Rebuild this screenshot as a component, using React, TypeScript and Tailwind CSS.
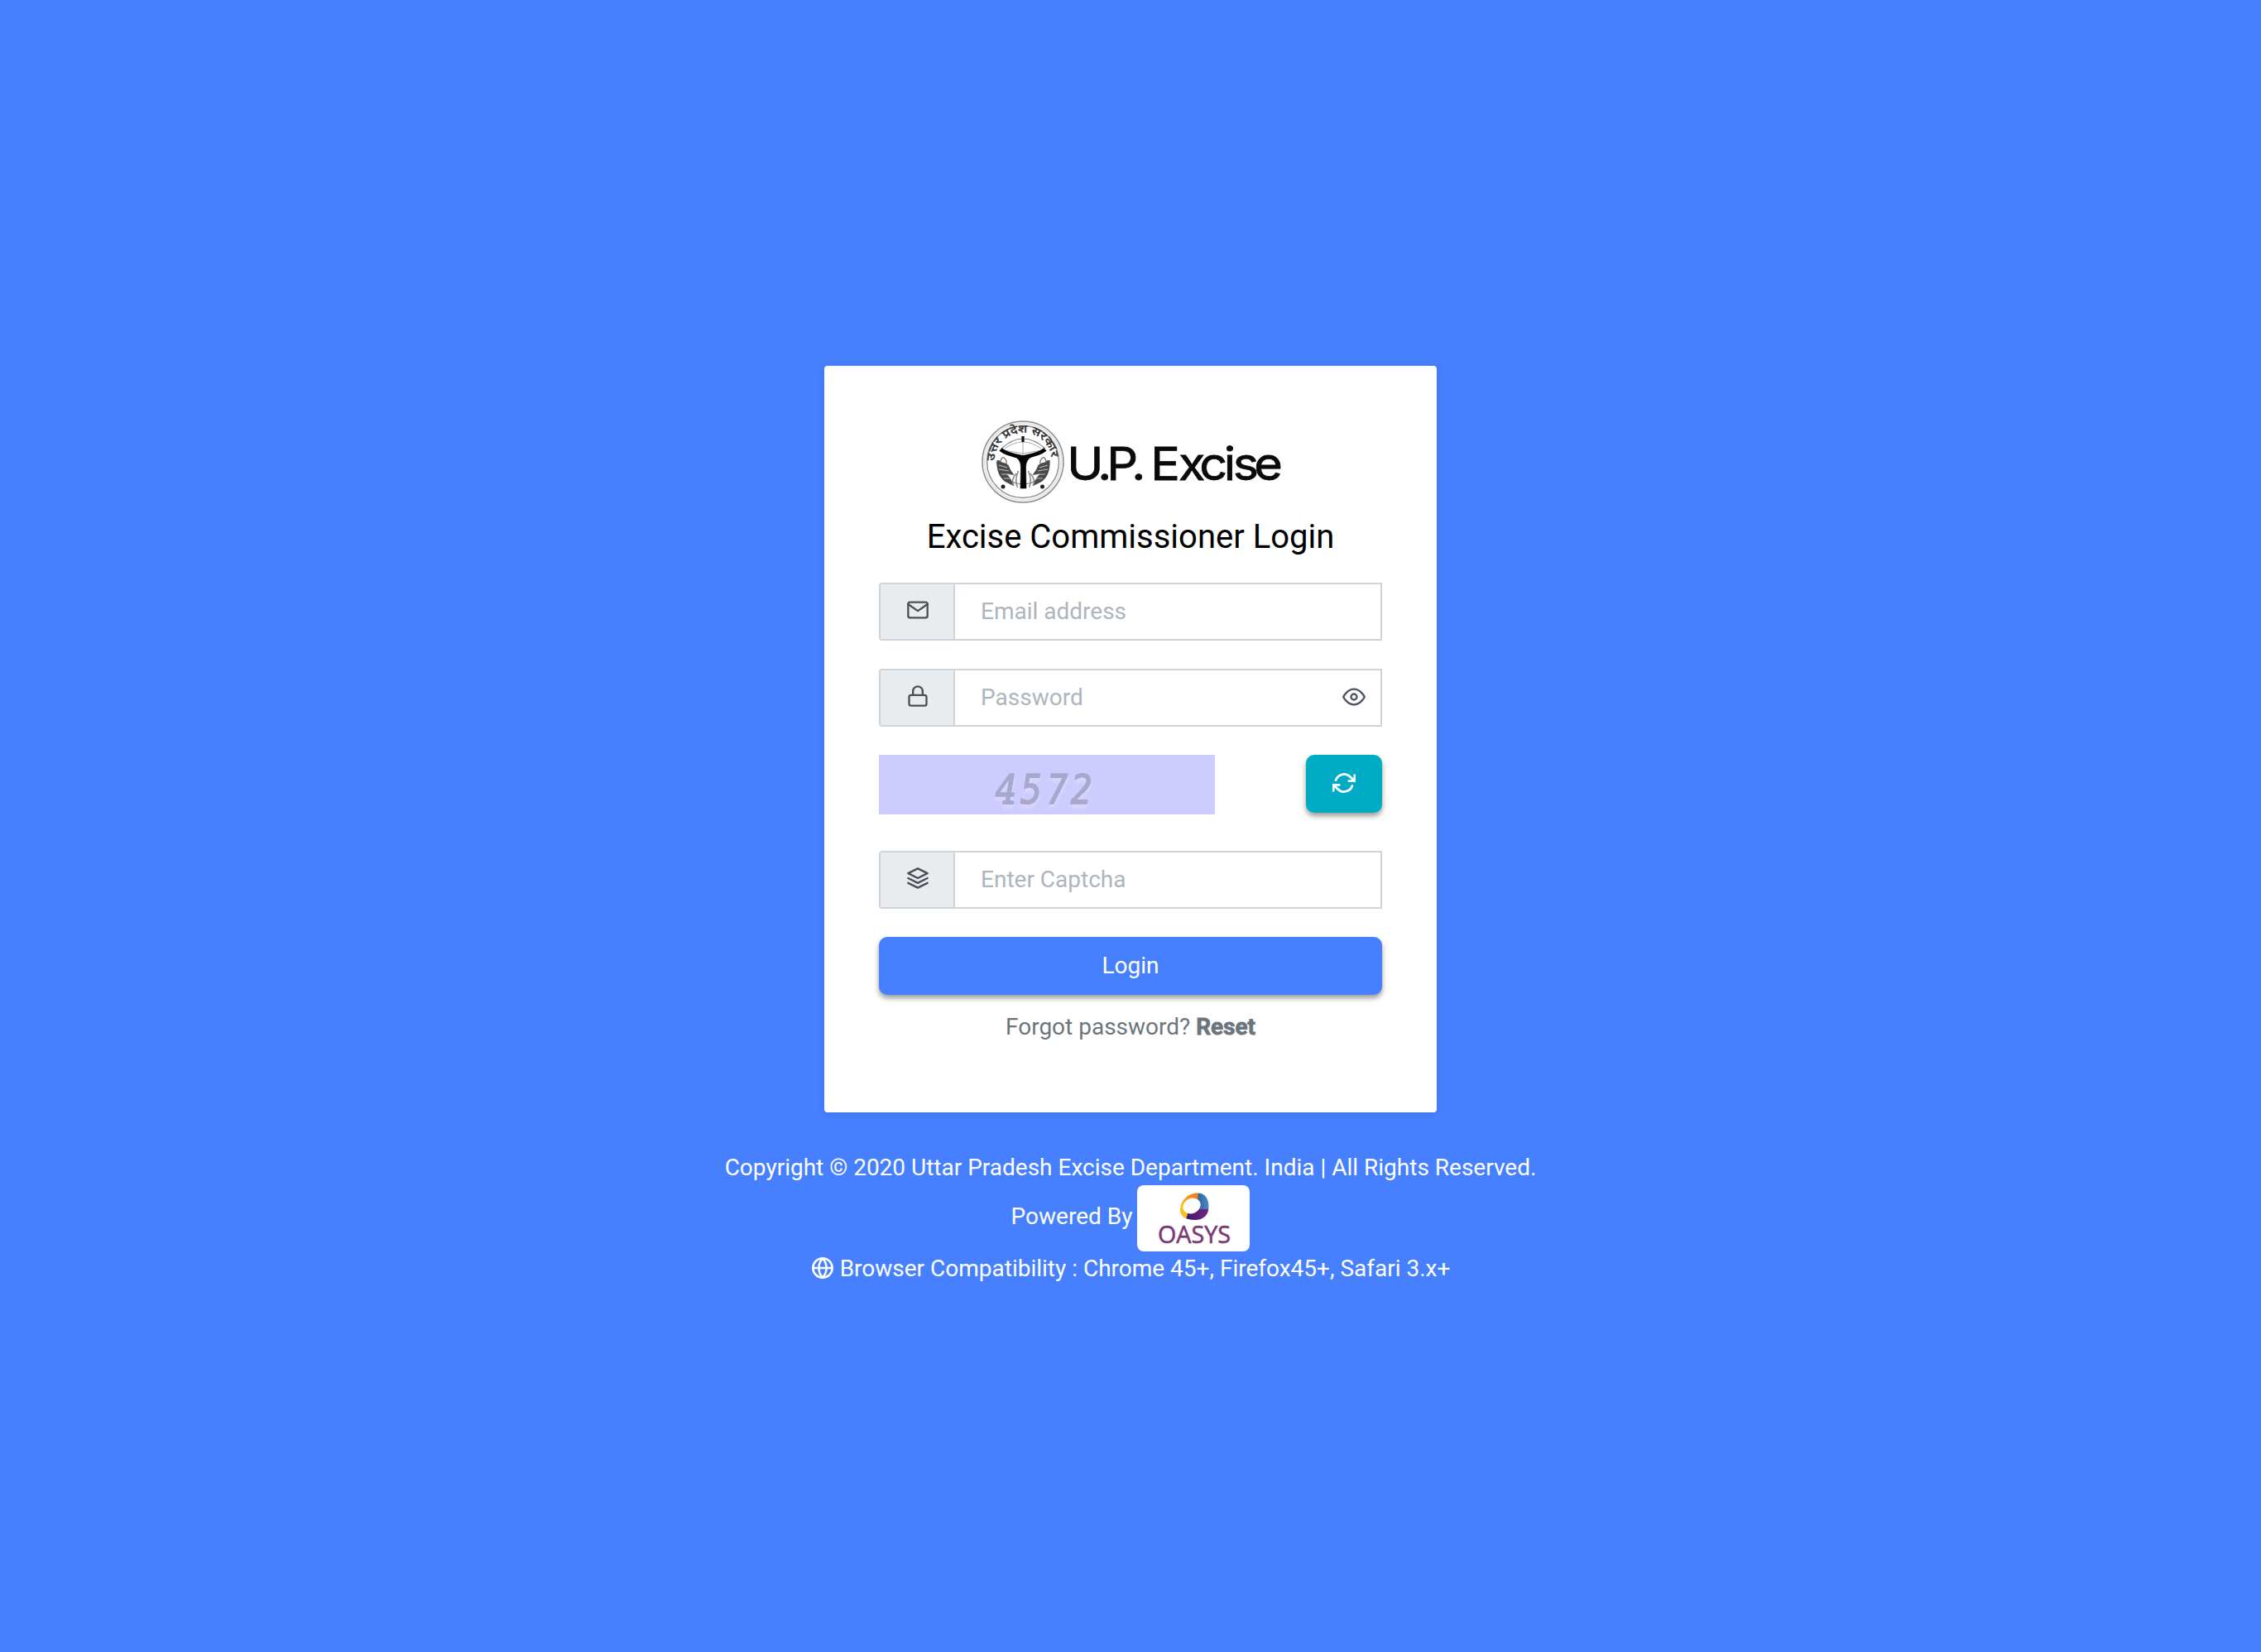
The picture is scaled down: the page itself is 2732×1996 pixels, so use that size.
import { FiMail, FiLock, FiLayers, FiEye, FiRefreshCw, FiGlobe } from "react-icons/fi";
import type { ReactNode } from "react";

function Emblem() {
  return (
    <g fill="none" stroke="#222">
      <circle cx="50" cy="50" r="49" stroke="#8c8c8c" strokeWidth="1.5" />
      <circle cx="50" cy="50" r="46.500" stroke="#e9e9e9" strokeWidth="3" />
      <circle cx="50" cy="50" r="43.500" stroke="#8c8c8c" strokeWidth="1.4" />
      <defs>
        <path id="emblem-arc" d="M15.500 49 A34 34 0 0 1 84.500 49" />
      </defs>
      <text fill="#333" stroke="#333" strokeWidth="0.5" fontSize="13" fontFamily="'Noto Sans', 'Noto Sans Devanagari', sans-serif">
        <textPath href="#emblem-arc" textLength="104" lengthAdjust="spacingAndGlyphs">उत्तर प्रदेश सरकार</textPath>
      </text>
      <path d="M18 50 A32.500 32.500 0 0 0 82 50" stroke="#999" strokeWidth="1.2" />
      <path d="M24 34 Q50 10 77 34" stroke="#888" strokeWidth="1.1" />
      <path d="M28 34 Q50 18 72 34 M28 36 L50 40 L72 36 M50 20 V42" stroke="#aaa" strokeWidth="1" />
      <path d="M50 19 V26" strokeWidth="3.2" stroke="#111" />
      <path d="M23 35 Q30 41 50 44.500 Q70 41 77 35" stroke="#050505" strokeWidth="4.800" />
      <path d="M40 43 Q50 46 61 43 Q53.500 48 53.500 56 L54 82 H47 L47.500 56 Q47.500 48 40 43Z" fill="#050505" stroke="#050505" strokeWidth="0.6" />
      <path d="M18.500 48 q-1 18 10 26 l10 5 q-2 -9 -8 -14 q4 0 9 1 q-5 -6 -7 -12 q-6 -6 -14 -6Z" fill="#4a4a4a" stroke="none" />
      <path d="M82.500 48 q1 18 -10 26 l-10 5 q2 -9 8 -14 q-4 0 -9 1 q5 -6 7 -12 q6 -6 14 -6Z" fill="#4a4a4a" stroke="none" />
      <path d="M21 54 l10 3 M21 59 l12 2 M24 65 l10 0 M27 70 l8 0 M80 54 l-10 3 M80 59 l-12 2 M77 65 l-10 0 M74 70 l-8 0" stroke="#bbb" strokeWidth="1.2" />
      <path d="M23 50 q1 -6 4 -5 q4 3 3 7 M78 50 q-1 -6 -4 -5 q-4 3 -3 7" stroke="#888" strokeWidth="1.500" fill="#fff" />
      <path d="M43.500 81 q-4 -9 1 -20 M39 79 q-4 -7 3 -15 M57.500 81 q4 -9 -1 -20 M62 79 q4 -7 -3 -15" stroke="#888" strokeWidth="1.500" />
      <circle cx="26" cy="80" r="2.500" fill="#222" stroke="none" />
      <circle cx="73.500" cy="80" r="2.500" fill="#222" stroke="none" />
    </g>
  );
}

function BrandLogo() {
  return (
    <svg width="366" height="100" viewBox="0 0 366 100" className="ml-[6px] block" role="img" aria-label="U.P. Excise">
      <Emblem />
      <text
        x="96.5 131 141.3 169.4 182 190.8 222.4 246 273.6 283.8 307.8"
        y="72"
        transform="scale(1.07 1)"
        fill="#0a0a0a"
        stroke="#0a0a0a"
        strokeWidth="0.8"
        fontFamily="Inter, sans-serif"
        fontWeight="400"
        fontSize="55.500"
      >
        U.P. Excise
      </text>
    </svg>
  );
}

function OasysLogo() {
  return (
    <svg width="136" height="80" viewBox="0 0 136 80" className="block rounded-[8px] bg-white" role="img" aria-label="OASYS">
      <defs>
        <clipPath id="ring">
          <path d="M73 9.500 C82 9.500 86.500 16 86.500 26 C86.500 36 80 42 70 42 C59 42 52 38 52 30 C52 19 61 9.500 73 9.500Z" />
        </clipPath>
        <linearGradient id="warm" x1="0" y1="1" x2="1" y2="0">
          <stop offset="0.35" stopColor="#fcc01a" />
          <stop offset="0.8" stopColor="#f08228" />
        </linearGradient>
        <linearGradient id="cool" x1="0" y1="0" x2="1" y2="0">
          <stop offset="0" stopColor="#2f5da0" />
          <stop offset="1" stopColor="#4a90c8" />
        </linearGradient>
        <linearGradient id="plum" x1="0" y1="0" x2="1" y2="0">
          <stop offset="0" stopColor="#3a1a6e" />
          <stop offset="1" stopColor="#7a2380" />
        </linearGradient>
      </defs>
      <g clipPath="url(#ring)">
        <path d="M50 8 H74 V24 L59 44 H50Z" fill="url(#warm)" />
        <path d="M74 8 H88 V29 H72Z" fill="url(#cool)" />
        <path d="M88 29 V44 H58 L62 32 L72 29Z" fill="url(#plum)" />
      </g>
      <ellipse cx="66" cy="25" rx="11" ry="9" transform="rotate(-25 66 25)" fill="#fff" />
      <text x="25" y="69.500" fontFamily="'Open Sans', sans-serif" fontSize="29" fill="#7a3a78" stroke="#7a3a78" strokeWidth="0.6" textLength="88" lengthAdjust="spacingAndGlyphs">
        OASYS
      </text>
    </svg>
  );
}

function Captcha() {
  return (
    <svg width="406" height="72" viewBox="0 0 406 72" className="block bg-[#ccccff]" role="img" aria-label="Captcha">
      <g className="[filter:drop-shadow(0_5px_2px_#ddd6ff)]">
        <text
          x="163.5 199 235.5 269.5"
          y="59.500"
          transform="scale(0.86 1)"
          fontFamily="'DejaVu Sans Mono', monospace"
          fontStyle="italic"
          fontSize="50"
          fill="#a8a8cc"
          stroke="#a8a8cc"
          strokeWidth="1.500"
          strokeLinejoin="round"
        >
          4572
        </text>
        <path d="M151.500 57.500 H161" stroke="#a8a8cc" strokeWidth="5" strokeLinecap="round" />
      </g>
    </svg>
  );
}

function Field({ icon, placeholder, type = "text", trailing }: { icon: ReactNode; placeholder: string; type?: string; trailing?: ReactNode }) {
  return (
    <div className="flex h-[70px] w-full rounded-l-[4px] border-2 border-[#ced4da] bg-white">
      <div className="flex w-[90px] shrink-0 items-center justify-center rounded-l-[2px] border-r-2 border-[#ced4da] bg-[#e9ecef] pb-1 pl-[1px] text-[#495057]">
        {icon}
      </div>
      <input
        type={type}
        placeholder={placeholder}
        className="min-w-0 flex-1 bg-transparent pl-[31px] text-[28px] leading-[42px] outline-none placeholder:text-[#adb5bd] placeholder:opacity-100"
      />
      {trailing}
    </div>
  );
}

export default function App() {
  return (
    <div className="flex h-[1996px] w-full flex-col items-center bg-[#4680ff] pt-[442px] font-['Roboto',sans-serif] text-[28px] leading-[42px]">
      <main className="flex h-[902px] w-[740px] flex-col items-center rounded-[4px] bg-white px-[66px] pt-[66px] shadow-[0_2px_12px_rgba(0,0,0,0.09)]">
        <BrandLogo />
        <h1 className="mt-[17px] text-[40px] leading-[48px] text-black">Excise Commissioner Login</h1>
        <form className="mt-[31px] flex w-full flex-col">
          <Field icon={<FiMail size={28} />} placeholder="Email address" />
          <div className="mt-[34px]">
            <Field
              icon={<FiLock size={28} />}
              placeholder="Password"
              type="password"
              trailing={
                <button type="button" aria-label="Show password" className="mr-[18px] pb-[3px] text-[#4f5466]">
                  <FiEye size={28} />
                </button>
              }
            />
          </div>
          <div className="mt-[34px] flex h-[72px] items-start justify-between">
            <Captcha />
            <button type="button" aria-label="Refresh captcha" className="flex h-[70px] w-[92px] items-center justify-center rounded-[10px] bg-[#00acc5] pb-[3px] text-white shadow-[0_4px_6px_rgba(0,0,0,0.4)]">
              <FiRefreshCw size={28} strokeWidth={2.4} />
            </button>
          </div>
          <div className="mt-[44px]">
            <Field icon={<FiLayers size={28} />} placeholder="Enter Captcha" />
          </div>
          <button type="button" className="mt-[34px] h-[70px] w-full rounded-[10px] bg-[#4680ff] text-white shadow-[0_4px_6px_rgba(0,0,0,0.4)]">
            Login
          </button>
        </form>
        <p className="mt-[18px] text-[#6c757d]">
          Forgot password? <a className="font-semibold [-webkit-text-stroke:1px_#6c757d]">Reset</a>
        </p>
      </main>
      <footer className="mt-[46px] flex flex-col items-center text-white">
        <p>Copyright © 2020 Uttar Pradesh Excise Department. India | All Rights Reserved.</p>
        <div className="flex items-center gap-[6px]">
          <span className="pb-[4px]">Powered By</span>
          <OasysLogo />
        </div>
        <p className="flex items-center gap-[7px]">
          <FiGlobe size={28} strokeWidth={2.2} className="mb-[2px]" />
          Browser Compatibility : Chrome 45+, Firefox45+, Safari 3.x+
        </p>
      </footer>
    </div>
  );
}
